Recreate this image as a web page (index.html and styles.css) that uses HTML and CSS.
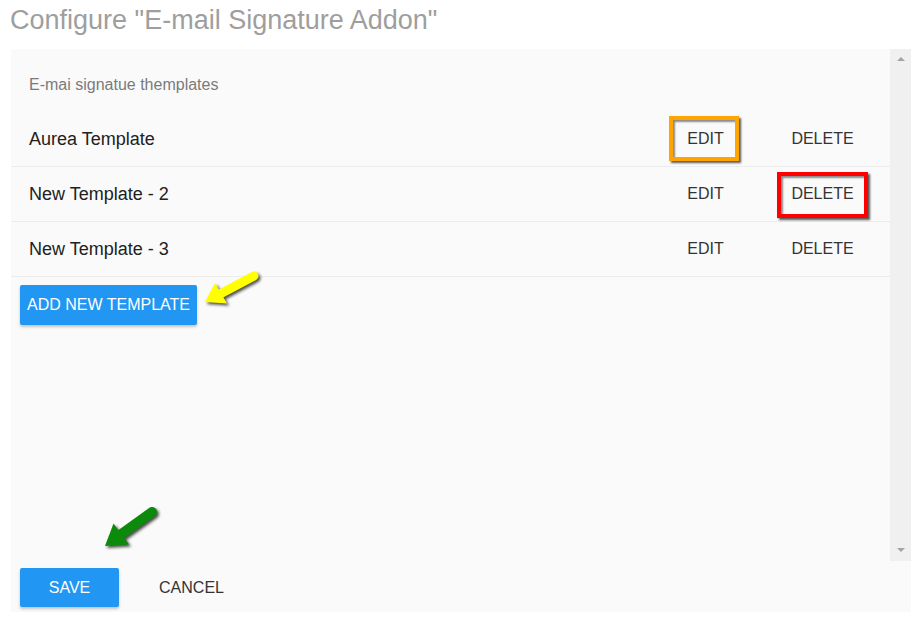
FILE: index.html
```html
<!DOCTYPE html>
<html lang="en">
<head>
<meta charset="utf-8">
<title>Configure "E-mail Signature Addon"</title>
<link rel="stylesheet" href="styles.css">
</head>
<body>
<h1 class="title">Configure "E-mail Signature Addon"</h1>
<div class="panel">
  <div class="scroll">
    <div class="content">
      <div class="subheader">E-mai signatue themplates</div>
      <div class="row">
        <span class="name">Aurea Template</span>
        <div class="actions">
          <button class="flat">EDIT<span class="mark mark-orange"></span></button>
          <button class="flat">DELETE</button>
        </div>
      </div>
      <div class="row">
        <span class="name">New Template - 2</span>
        <div class="actions">
          <button class="flat">EDIT</button>
          <button class="flat">DELETE<span class="mark mark-red"></span></button>
        </div>
      </div>
      <div class="row">
        <span class="name">New Template - 3</span>
        <div class="actions">
          <button class="flat">EDIT</button>
          <button class="flat">DELETE</button>
        </div>
      </div>
      <button class="raised add-btn">ADD NEW TEMPLATE</button>
    </div>
    <div class="scrollbar">
      <span class="tri tri-up"></span>
      <span class="tri tri-down"></span>
    </div>
  </div>
  <div class="footer">
    <button class="raised save-btn">SAVE</button>
    <button class="flat cancel-btn">CANCEL</button>
  </div>
</div>
<svg class="arrows" width="921" height="621" viewBox="0 0 921 621" aria-hidden="true">
  <g class="arrow-yellow">
    <line x1="254" y1="276" x2="221" y2="293.4" stroke="#ffff00" stroke-width="9" stroke-linecap="round"/>
    <polygon points="205,302 227,303.5 215,283" fill="#ffff00"/>
  </g>
  <g class="arrow-green">
    <line x1="152" y1="512" x2="121" y2="534.2" stroke="#0b8a0b" stroke-width="10" stroke-linecap="round"/>
    <polygon points="105,546 129,544.5 113.5,523.5" fill="#0b8a0b"/>
  </g>
</svg>
</body>
</html>
```

FILE: styles.css
```css
* { box-sizing: border-box; }

html, body {
  margin: 0;
  padding: 0;
  background: #ffffff;
}

body {
  font-family: "Liberation Sans", Arial, sans-serif;
  width: 921px;
  height: 621px;
  position: relative;
  overflow: hidden;
}

.title {
  margin: 0;
  height: 49px;
  padding: 7px 0 0 10px;
  font-size: 27px;
  line-height: 27px;
  font-weight: normal;
  color: #9e9e9e;
}

.panel {
  margin-left: 11px;
  width: 900px;
  height: 563px;
  background: #fafafa;
  display: flex;
  flex-direction: column;
}

.scroll {
  display: flex;
  height: 512px;
}

.content {
  flex: 1;
}

.subheader {
  height: 63px;
  padding: 24px 0 0 18px;
  font-size: 16px;
  line-height: 24px;
  color: #7a7a7a;
}

.row {
  height: 55px;
  display: flex;
  align-items: center;
  padding-left: 18px;
  padding-right: 19px;
  border-bottom: 1px solid #ececec;
}

.name {
  flex: 1;
  font-size: 18px;
  color: #212121;
}

.actions {
  display: flex;
  gap: 20px;
  align-self: stretch;
}

button {
  font-family: "Liberation Sans", Arial, sans-serif;
  border: 0;
  margin: 0;
  cursor: pointer;
}

.flat {
  position: relative;
  width: 97px;
  background: transparent;
  font-size: 16px;
  color: #333333;
  padding: 0;
}

.mark {
  position: absolute;
  border-style: solid;
  border-width: 4px;
  box-shadow: 2px 2px 2px rgba(0, 0, 0, 0.65), inset 2px 2px 2px rgba(0, 0, 0, 0.45);
  pointer-events: none;
}

.mark-orange {
  left: 12px;
  top: 4px;
  width: 70px;
  height: 45px;
  border-color: #ffa500;
}

.mark-red {
  left: 3px;
  top: 5px;
  width: 91px;
  height: 46px;
  border-color: #ff0000;
}

.raised {
  background: #2196f3;
  color: #ffffff;
  font-size: 16px;
  border-radius: 2px;
  box-shadow: 0 2px 3px rgba(0, 0, 0, 0.22);
}

.add-btn {
  display: block;
  margin: 8px 0 0 9px;
  width: 177px;
  height: 40px;
  padding: 0;
}

.scrollbar {
  width: 21px;
  background: #f0f0f0;
  display: flex;
  flex-direction: column;
  justify-content: space-between;
  align-items: center;
  padding: 8px 0 9px;
}

.tri {
  width: 0;
  height: 0;
  border-left: 4px solid transparent;
  border-right: 4px solid transparent;
}

.tri-up {
  border-bottom: 4px solid #a3a3a3;
}

.tri-down {
  border-top: 4px solid #a3a3a3;
}

.footer {
  display: flex;
  gap: 23px;
  padding: 7px 0 0 9px;
}

.save-btn {
  width: 99px;
  height: 39px;
  padding: 0;
}

.cancel-btn {
  width: 99px;
  height: 39px;
}

.arrows {
  position: absolute;
  left: 0;
  top: 0;
  pointer-events: none;
}

.arrow-yellow,
.arrow-green {
  filter: drop-shadow(2px 2px 1.5px rgba(0, 0, 0, 0.7));
}
```
